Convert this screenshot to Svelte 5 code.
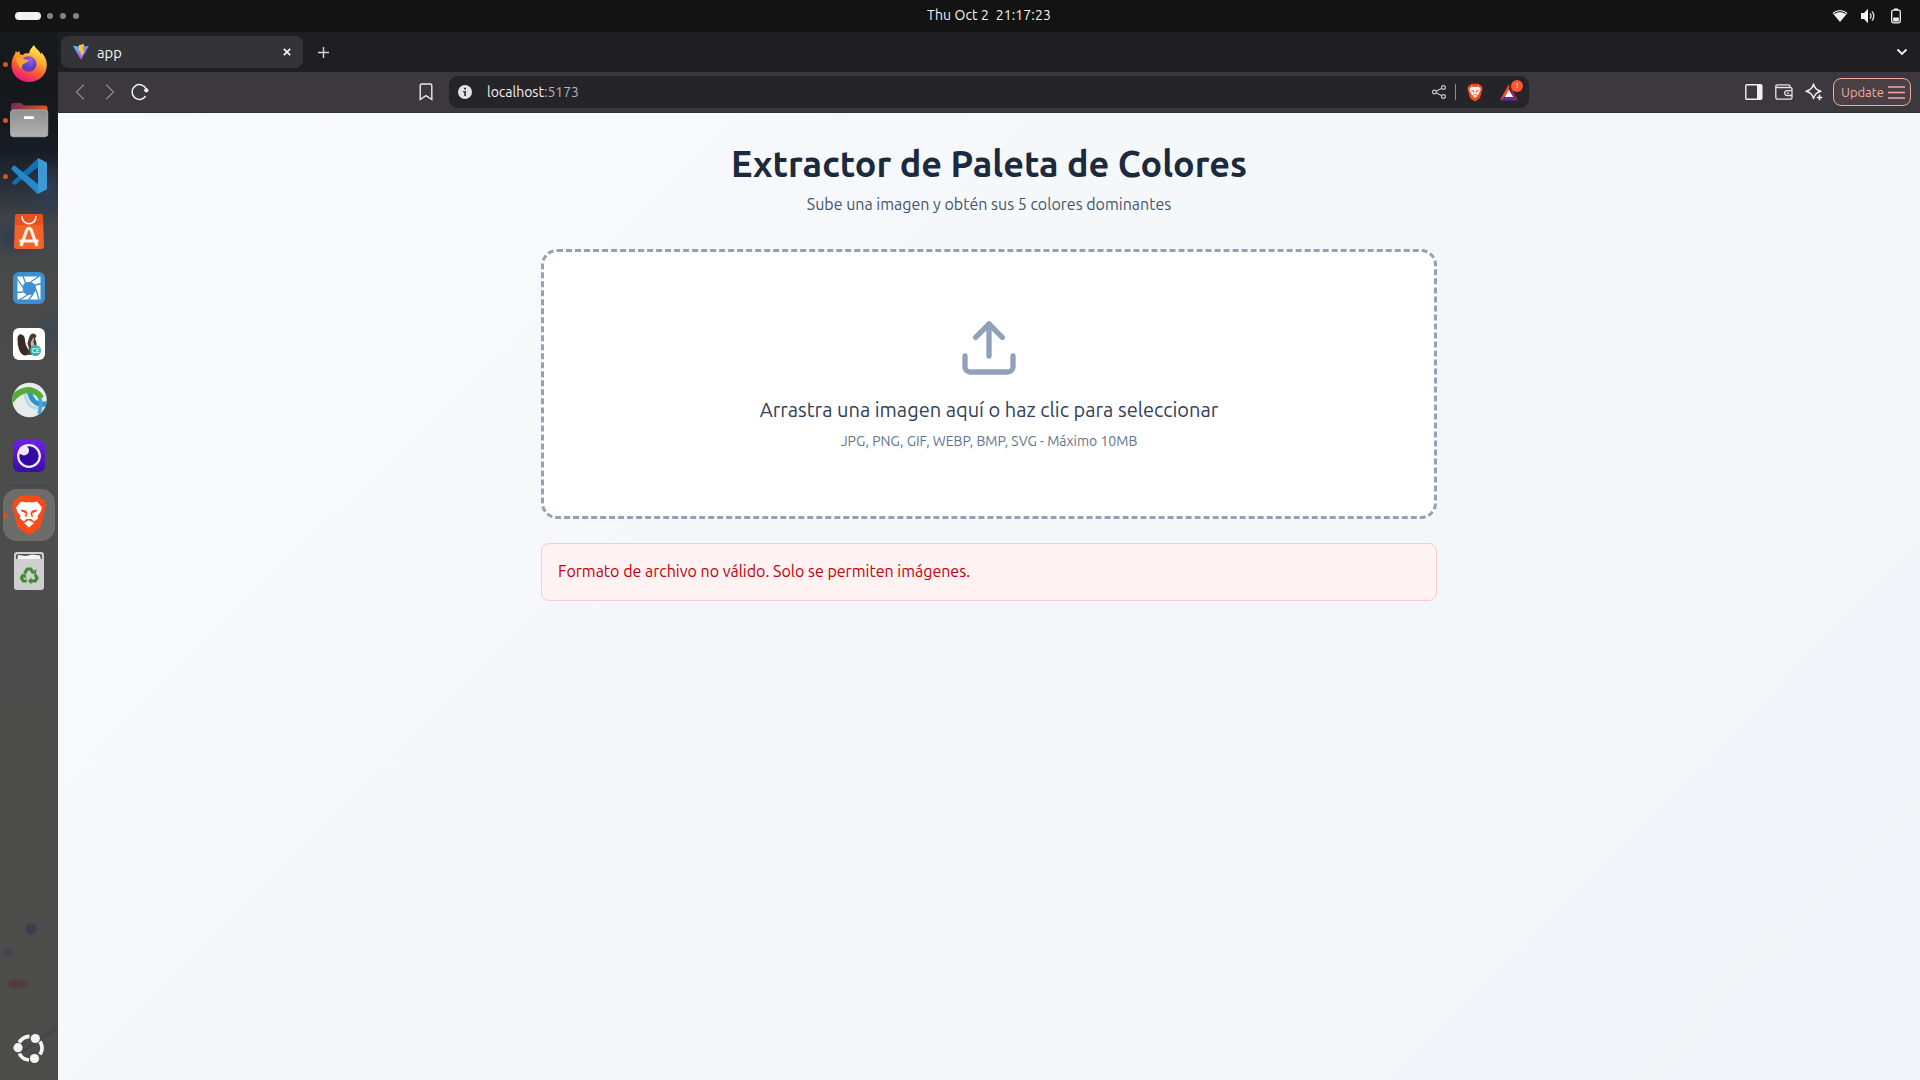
{#snippet lion()}
  <path class="shield" d="M19 9.500 Q21 8 24 8.500 L34 8.500 Q37 8 39 9.500 L41 12 L44 13 L46 19 L45 22 L41 38 Q40 41 37 43 L31 47 Q29 48.400 27 47 L21 43 Q18 41 17 38 L13 22 L12 19 L14 13 L17 12 Z" />
  <path class="face" fill-rule="evenodd" d="M21 14.500 L26 15.500 L29 15 L32 15.500 L37 14.500 L42 20.500 L40.500 25 L37.500 29 L38 31.500 L34 34.500 L31.500 32 L26.500 32 L24 34.500 L20 31.500 L20.500 29 L17.500 25 L16 20.500 Z M20.500 22.500 L21.500 24.500 L25.800 26.300 L25 30 L26.800 29.500 L27.500 26 L26 23.500 Z M37.500 22.500 L36.500 24.500 L32.200 26.300 L33 30 L31.200 29.500 L30.500 26 L32 23.500 Z M24 36 L29 33.200 L34 36 L29 40.600 Z" />
{/snippet}

<div class="desktop">
  <header class="topbar">
    <div class="spaces"><i class="pill"></i><i></i><i></i><i></i></div>
    <div class="clock">Thu Oct 2&nbsp; 21:17:23</div>
    <div class="status">
      <svg width="16" height="16" viewBox="0 0 16 16"><path d="M.5 5 Q8-.8 15.500 5 L8 14Z" fill="#f2f2f2"/><path d="M2.200 5.700 Q8 1.500 13.800 5.700" fill="none" stroke="#131313" stroke-width="1"/></svg>
      <svg width="16" height="16" viewBox="0 0 16 16"><path d="M1 5h3l4-4.200v14.400L4 11H1z" fill="#f2f2f2"/><path d="M10 5.500q2 2.500 0 5M12 3.300q3.600 4.700 0 9.400" fill="none" stroke="#ddd" stroke-width="1.300"/></svg>
      <svg width="16" height="16" viewBox="0 0 16 16"><rect x="3.700" y="2.200" width="8.600" height="12.600" rx="1.800" fill="none" stroke="#f2f2f2" stroke-width="1.300"/><path d="M6 .6h4v1.400H6zM5.200 9.500h5.600v4H5.200z" fill="#f2f2f2"/></svg>
    </div>
  </header>

  <nav class="dock">
    <div class="app running">
      <svg viewBox="0 0 58 56">
        <defs>
          <linearGradient id="fx" x1=".75" y1="0" x2=".3" y2="1"><stop offset="0" stop-color="#fff44f"/><stop offset=".35" stop-color="#ffb02e"/><stop offset=".65" stop-color="#ff5a36"/><stop offset="1" stop-color="#e8127c"/></linearGradient>
          <radialGradient id="fg" cx=".6" cy=".25"><stop offset="0" stop-color="#a05cf5"/><stop offset="1" stop-color="#5b3fc0"/></radialGradient>
        </defs>
        <path d="M34 9c1 2 2 3.500 4.500 5.500 1 1 1.500 2 1.800 3.400l1.200-1.400c3.500 4 5.300 8 5.300 12.500 0 10-8 17-17.800 17S11.500 39 11.500 29c0-4.500 1.500-8.500 3.700-11.500l.4-2.500 2 1.500 1.600-1.800.8 3.500 3 .8C25 16.500 28 17.500 29 17.500 29.500 14 31.500 11.500 34 9z" fill="url(#fx)"/>
        <circle cx="28.700" cy="28" r="7.800" fill="url(#fg)"/>
        <path d="M15.500 22c3-1.500 5-.8 7.500.5l5.500 1.800c-.5 2.500-4 2.700-5.500 4.200-1.300 1.300-1 3-2 4-2.500-2-4.500-6-5.500-10.500z" fill="#ffa22e"/>
      </svg>
    </div>
    <div class="app running">
      <svg viewBox="0 0 58 56">
        <defs>
          <linearGradient id="fb"><stop offset="0" stop-color="#762a50"/><stop offset="1" stop-color="#e4511f"/></linearGradient>
          <linearGradient id="ff" x2="0" y2="1"><stop offset="0" stop-color="#8f8f8f"/><stop offset="1" stop-color="#b1b1b1"/></linearGradient>
        </defs>
        <path d="M11 24V13.500q0-2.500 2.500-2.500H20q1.500 0 2.500 1.200T25 13.500h20q2.500 0 2.500 2.500v8z" fill="url(#fb)"/>
        <rect x="10.500" y="17.800" width="37.300" height="27" rx="3" fill="url(#ff)" stroke="#c3c3c3" stroke-width=".6"/>
        <rect x="24" y="24.300" width="10" height="2.700" rx=".6" fill="#fff"/>
      </svg>
    </div>
    <div class="app running">
      <svg viewBox="0 0 58 56">
        <path d="M11.500 20l3-2.500 25 20L37.500 45.700z" fill="#2489ca"/>
        <path d="M11.500 34.500l3 2.700L38.500 19V10z" fill="#1070b3"/>
        <path d="M14 17.600L11.500 20v1.500L37.500 45.700V36z" fill="#2489ca"/>
        <path d="M37 10.500q.7-.5 1.500-.2L46 14q1 .5 1 1.600v24.800q0 1.100-1 1.600l-7.500 3.600q-1 .3-1.700-.4 1.200.2 1.200-1.200V12q0-1.500-1-1.500z" fill="#3c99d4"/>
      </svg>
    </div>
    <div class="app">
      <svg viewBox="0 0 58 56">
        <path d="M15 12.500q0-2.500 2.500-2.500h23q2.500 0 2.500 2.500l1 30q0 2.500-2.500 2.500h-25Q14 45 14 42.500z" fill="#f2622b"/>
        <path d="M15 12.500q0-2.500 2.500-2.500h23q2.500 0 2.500 2.500l.3 8.500h-28.600z" fill="#e9501d"/>
        <path d="M22 12.500c0 9.500 14 9.500 14 0" fill="none" stroke="#fff" stroke-width="1.500" stroke-linecap="round"/>
        <path d="M21 42l6-16.500q2-2.500 4 0L37 42M19.500 37h19" fill="none" stroke="#fff4ea" stroke-width="3.200" stroke-linejoin="round"/>
      </svg>
    </div>
    <div class="app">
      <svg viewBox="0 0 58 56">
        <rect x="13" y="12" width="32" height="32" rx="6" fill="#3d8fd1"/>
        <path d="M17.500 16.500h23v23h-23z" fill="#fff"/>
        <path d="M25 22.500l6-.8 4.700 3.300.5 5-3 4.200-6 1-4-3.200-.7-5.500z" fill="#3d8fd1"/>
        <path d="M25.500 23l-2.500-7M31 21.800l8-5.500M35.300 25l6-1.500M36 29.500l3 10.500M33 34l-4.500 6M27.500 35l-8.500 5M23.300 32l-6.300.5M22.700 27l-5.500-8" stroke="#3d8fd1" stroke-width="1.300"/>
      </svg>
    </div>
    <div class="app">
      <svg viewBox="0 0 58 56">
        <rect x="13" y="12" width="32" height="32" rx="6" fill="#fff"/>
        <path d="M17.500 22q1-4.500 4-3.500 3.500 1 3.500 6 .3 5 3 8.500l1 5-3 1.500q-5 0-7-6-1.800-5-1.500-11.500z" fill="#3b2923"/>
        <path d="M29 22q1-4.500 4.500-4.500 2.500.5 3 2.500l-1.500 2.500 1.500 4-.5 9-5 3.500-5-.5 3-6-1.500-5z" fill="#4b382e"/>
        <path d="M33 22l1 .5-.5 3.500 1 4-3 1-1-4z" fill="#c8b6a8"/>
        <circle cx="35.500" cy="34.500" r="5.500" fill="#38b0b0"/>
        <text x="35.500" y="37" text-anchor="middle" font-size="6.500" font-weight="700" fill="#d6f3f2">CE</text>
      </svg>
    </div>
    <div class="app">
      <svg viewBox="0 0 58 56">
        <defs><clipPath id="gc"><circle cx="29.500" cy="28" r="17.300"/></clipPath></defs>
        <circle cx="29.500" cy="28" r="17.300" fill="#e6eceb"/>
        <g clip-path="url(#gc)" fill="none">
          <path d="M25 19c0 11 5 18 14 17" stroke="#b7dcd6" stroke-width="3"/>
          <path d="M29 18c2 12 9 17 20 13" stroke="#2f93cf" stroke-width="5"/>
          <path d="M36 20c5 5 6 13 3 22" stroke="#41a7d9" stroke-width="3.500"/>
          <path d="M9 32C15 21 25 16 33 19q6 2 8 7" stroke="#55ac38" stroke-width="6"/>
        </g>
      </svg>
    </div>
    <div class="app">
      <svg viewBox="0 0 58 56">
        <defs><linearGradient id="pg" x2="0" y2="1"><stop offset="0" stop-color="#6a22e8"/><stop offset="1" stop-color="#3a0ca3"/></linearGradient></defs>
        <rect x="13" y="12" width="32" height="32" rx="6" fill="url(#pg)"/>
        <circle cx="29" cy="28" r="10.800" fill="#3208a0" stroke="#f1ecfb" stroke-width="2.200"/>
        <circle cx="24" cy="22.500" r="5" fill="#f1ecfb"/>
      </svg>
    </div>
    <hr />
    <div class="app running active">
      <svg class="brave" viewBox="0 0 58 56">{@render lion()}</svg>
    </div>
    <div class="app">
      <svg viewBox="0 0 58 56">
        <rect x="14" y="9" width="30" height="38" rx="3" fill="#cfcfcf"/>
        <path d="M16 16v-3q0-2 2-2h22q2 0 2 2v3z" fill="#555"/>
        <path d="M17.500 16l.5-4 8 1 6-1.500 8 1 .8 3.500z" fill="#f5f5f5"/>
        <g fill="none" stroke="#3c8d2f" stroke-width="3.200"><path d="M24.500 30.500l2.800-4.500h3.500l2 3.200M35 31.500l2 3.500-1.700 3H30.500M26.800 38h-3.500L21.500 35l2-3.500"/></g>
        <path d="M31 30.500l5 .5.300-5zM31.500 34.500v7l-3.500-3.500zM20.500 32.500l5-2 .8 5z" fill="#3c8d2f"/>
      </svg>
    </div>
    <div class="app launcher">
      <svg viewBox="0 0 58 56">
        <g fill="none" stroke="#f4f4f4" stroke-width="3.700"><path d="M19.300 22.500A12 12 0 0 1 29.500 16.300"/><path d="M40 21.500A12 12 0 0 1 40 34.500"/><path d="M19.300 33.500A12 12 0 0 0 29 40"/></g>
        <g fill="#f4f4f4"><circle cx="35.300" cy="18.500" r="4.600"/><circle cx="18" cy="27.700" r="4.600"/><circle cx="34.500" cy="38.500" r="4.600"/></g>
      </svg>
    </div>
  </nav>

  <section class="browser">
    <div class="tabstrip">
      <div class="tab">
        <svg width="16" height="16" viewBox="0 0 16 16">
          <defs><linearGradient id="v" x2=".7" y2="1"><stop offset="0" stop-color="#41d1ff"/><stop offset="1" stop-color="#bd34fe"/></linearGradient></defs>
          <path d="M0 1.800L7 2.800 16 1.800 8.300 15.600q-.3.400-.6 0z" fill="url(#v)"/>
          <path d="M11.300.1L6 1.100l-.4 6.100 2.300-.3-.7 3.200 1.500-.4-1 4.300 4.300-7.500-2.300.3z" fill="#ffc72e"/>
        </svg>
        <span class="tabname">app</span>
        <svg class="close" width="8" height="8" viewBox="0 0 8 8"><path d="M.8.800l6.400 6.400M7.200.800L.8 7.200" stroke="#f4f4f6" stroke-width="1.700"/></svg>
      </div>
      <svg class="plus" width="11" height="11" viewBox="0 0 11 11"><path d="M5.500 0v11M0 5.500h11" stroke="#d5d4d8" stroke-width="1.400"/></svg>
      <svg class="chev" width="12" height="8" viewBox="0 0 12 8"><path d="M1.500 1.500L6 6l4.500-4.500" fill="none" stroke="#f4f4f6" stroke-width="1.800"/></svg>
    </div>

    <div class="toolbar">
      <div class="nav">
        <svg width="10" height="16" viewBox="0 0 10 16"><path d="M8.800.8L1.500 8l7.300 7.200" fill="none" stroke="#89888c" stroke-width="1.300"/></svg>
        <svg width="10" height="16" viewBox="0 0 10 16"><path d="M1.200.8L8.500 8l-7.300 7.200" fill="none" stroke="#89888c" stroke-width="1.300"/></svg>
        <svg class="reload" width="18" height="18" viewBox="0 0 18 18"><path d="M14.600 13.300A7.400 7.400 0 1 1 15.300 6" fill="none" stroke="#f4f4f6" stroke-width="1.500"/><circle cx="15.300" cy="7.300" r="2.100" fill="#f4f4f6"/></svg>
      </div>
      <svg class="bookmark" width="14" height="18" viewBox="0 0 14 18"><path d="M1.200 2.500Q1.200 1 2.700 1h8.600q1.500 0 1.500 1.500v14L7 12.700l-5.800 3.800z" fill="none" stroke="#e9e9eb" stroke-width="1.400"/></svg>
      <div class="urlbar">
        <svg width="14" height="14" viewBox="0 0 14 14"><circle cx="7" cy="7" r="7" fill="#e3e1e6"/><path d="M6 2.800h2v1.800H6zM5 6h3v5H6.200V7.200H5z" fill="#37363b"/></svg>
        <span class="url"><b>localhost</b>:5173</span>
        <svg class="share" width="14" height="14" viewBox="0 0 14 14"><g fill="none" stroke="#c5c4c9" stroke-width="1.200"><circle cx="2.500" cy="7" r="1.900"/><circle cx="11.500" cy="2.500" r="1.900"/><circle cx="11.500" cy="11.500" r="1.900"/><path d="M4.200 6.200l5.600-2.900M4.200 7.800l5.600 2.900"/></g></svg>
        <i class="bar"></i>
        <svg class="brave" width="16" height="19" viewBox="11 7 36 42">{@render lion()}</svg>
        <div class="bat">
          <svg width="18" height="17" viewBox="0 0 18 17"><path d="M9 0L0 16l9-5z" fill="#ff4724"/><path d="M9 0l9 16-5-2.500z" fill="#9e1f63"/><path d="M0 16.500h18L13 12H5z" fill="#662d91"/><path d="M9 5.700l4.200 7.300H4.800z" fill="#fff"/></svg>
          <span class="badge">1</span>
        </div>
      </div>
      <div class="actions">
        <svg width="18" height="16" viewBox="0 0 18 16"><rect x=".8" y=".8" width="16" height="14.400" rx="1" fill="none" stroke="#f0eff2" stroke-width="1.400"/><path d="M12 1h5v14h-5z" fill="#f0eff2"/></svg>
        <svg width="18" height="16" viewBox="0 0 18 16"><g fill="none" stroke="#e6e5e8" stroke-width="1.300"><path d="M15 3.500V2.300Q15 .8 13.500.8H2.500Q.8.8.8 2.500v10.800Q.8 15.200 2.700 15.200h12.600q1.700 0 1.700-1.700V5.200q0-1.700-1.700-1.700H2.500Q.8 3.500.8 2.200M17 6.700h-4.500q-2.800 0-2.800 2.400t2.800 2.400H17"/></g><path d="M12 8.500h2v1.200h-2z" fill="#e6e5e8"/></svg>
        <svg width="18" height="18" viewBox="0 0 18 18"><path d="M8.500 1Q9.900 7 16 8.200 9.900 9.500 8.500 15.500 7.100 9.500 1 8.200 7.100 7 8.500 1z" fill="none" stroke="#eeedf0" stroke-width="1.400" stroke-linejoin="round"/><path d="M14.500 11v6.500M11.300 14.300h6.500" stroke="#3b393e" stroke-width="3"/><path d="M14.500 11.800v5.400M11.800 14.500h5.400" stroke="#f4f4f6" stroke-width="1.500"/></svg>
        <button class="update">Update<svg width="17" height="13" viewBox="0 0 17 13"><path d="M0 1h17M0 6.500h17M0 12h17" stroke="#f0a8a4" stroke-width="1.300"/></svg></button>
      </div>
    </div>

    <main class="page">
      <h1>Extractor de Paleta de Colores</h1>
      <p class="sub">Sube una imagen y obtén sus 5 colores dominantes</p>
      <div class="drop">
        <svg width="64" height="64" viewBox="0 0 24 24" fill="none" stroke="#90a1b9" stroke-width="2" stroke-linecap="round" stroke-linejoin="round"><path d="M21 15v4a2 2 0 0 1-2 2H5a2 2 0 0 1-2-2v-4"/><path d="M17 8l-5-5-5 5"/><path d="M12 3v12"/></svg>
        <p class="lead">Arrastra una imagen aquí o haz clic para seleccionar</p>
        <p class="hint">JPG, PNG, GIF, WEBP, BMP, SVG - Máximo 10MB</p>
      </div>
      <div class="error">Formato de archivo no válido. Solo se permiten imágenes.</div>
    </main>
  </section>
</div>

<style>
  :global(body) { margin: 0; overflow: hidden; }
  .desktop { width: 1920px; height: 1080px; display: grid; grid-template: 32px 1048px / 58px 1fr; font-family: Ubuntu, "Noto Sans", sans-serif; }
  svg { display: block; flex: none; }
  .topbar { grid-column: 1 / 3; background: #131313; color: #f2f2f2; display: grid; grid-template-columns: calc(50% - 33px) auto 1fr; align-items: center; }
  .spaces { display: flex; align-items: center; gap: 7px; padding-left: 15px; }
  .spaces i { width: 6px; height: 6px; border-radius: 3px; background: #858585; }
  .spaces .pill { width: 26px; height: 8px; border-radius: 4px; background: #f2f2f2; margin-right: -1px; }
  .clock { font-size: 14px; letter-spacing: .12px; line-height: 30px; padding-bottom: 2px; }
  .status { display: flex; justify-content: flex-end; gap: 12px; padding-right: 16px; }

  .dock { display: flex; flex-direction: column; box-sizing: border-box; padding: 4px 0; background:
    radial-gradient(ellipse 6px 6px at 31px 897px, #43394d 80%, transparent),
    radial-gradient(ellipse 6px 5px at 8px 921px, #47424d 70%, transparent),
    radial-gradient(ellipse 12px 6px at 17px 952px, #503d42 70%, transparent),
    linear-gradient(145deg, transparent 58%, #444149 60%, transparent 64%) 20px 975px / 38px 50px no-repeat,
    radial-gradient(ellipse 22px 34px at 48px 160px, #2d3d54, transparent),
    radial-gradient(ellipse 26px 22px at 14px 205px, #2e3d50, transparent),
    radial-gradient(ellipse 20px 26px at 50px 300px, #3c4754, transparent),
    linear-gradient(#171a1c 0, #14181b 60px, #171b23 115px, #272d37 150px, #42454a 190px, #484948 240px, #4b4c4b 400px, #4c4d4b 100%); }
  .dock hr { width: 40px; height: 1px; border: 0; margin: 1px 0 1px 9px; background: #414241; flex: none; }
  .app { height: 56px; flex: none; position: relative; }
  .app svg { width: 58px; height: 56px; position: relative; }
  .running::before { content: ""; position: absolute; left: 3px; top: 26px; width: 5px; height: 5px; border-radius: 50%; background: #e0501e; z-index: 2; }
  .active::after { content: ""; position: absolute; inset: 2px 3px; border-radius: 14px; background: #6c6d6b; }
  .active svg { z-index: 1; }
  .launcher { margin-top: auto; }
  .brave .shield { fill: #fb4a1a; }
  .brave .face { fill: #fff; }

  .browser { display: grid; grid-template-rows: 40px 41px 1fr; }
  .tabstrip { background: #1f1e23; display: flex; align-items: center; padding: 0 12px 0 3px; }
  .tab { box-sizing: border-box; width: 242px; height: 32px; border-radius: 8px; background: #343337; display: flex; align-items: center; padding: 0 12px; color: #f4f4f6; font-size: 14.7px; }
  .tabname { margin-left: 8px; }
  .close { margin-left: auto; }
  .plus { margin-left: 15px; }
  .chev { margin-left: auto; }

  .toolbar { background: #3b393e; border-bottom: 1px solid #2f2d33; box-sizing: border-box; display: flex; align-items: center; }
  .nav { display: flex; align-items: center; gap: 20px; padding-left: 17px; width: 344px; }
  .reload { margin-left: -4px; }
  .bookmark { margin-right: 16px; }
  .urlbar { box-sizing: border-box; width: 1080px; height: 32px; border-radius: 9px; background: #252429; display: flex; align-items: center; padding: 0 11px 0 9px; color: #b4b3b8; font-size: 14px; }
  .url { margin-left: 15px; }
  .url b { font-weight: 400; color: #f2f2f4; }
  .share { margin-left: auto; }
  .bar { width: 1px; height: 16px; background: #8c8b90; margin: 0 11px 0 9px; }
  .bat { position: relative; margin-left: 17px; width: 18px; }
  .badge { position: absolute; left: 11px; top: -4px; width: 12px; height: 12px; border-radius: 50%; background: #ff5630; color: #fff; font-size: 8px; line-height: 12px; text-align: center; }
  .actions { margin-left: auto; padding-right: 9px; display: flex; align-items: center; gap: 12px; }
  .update { box-sizing: border-box; width: 78px; height: 28px; margin-left: -2px; border: 1px solid #f5aaa6; border-radius: 8px; background: #4b4145; color: #f0a8a4; display: flex; align-items: center; justify-content: space-between; padding: 0 5px 0 7px; font: 13px Ubuntu, "Noto Sans", sans-serif; }

  .page { background: linear-gradient(135deg, #f8fafc, #f1f5f9); display: flex; flex-direction: column; align-items: center; }
  h1, p { margin: 0; white-space: nowrap; }
  h1 { font-size: 36px; font-weight: 600; line-height: 40px; color: #1d293d; margin-top: 31px; }
  .sub { font-size: 16px; line-height: 24px; color: #45556c; margin-top: 8px; }
  .drop { box-sizing: border-box; width: 896px; height: 270px; margin-top: 33px; border: 3px dashed #90a1b9; border-radius: 16px; background: #fff; display: flex; flex-direction: column; align-items: center; padding-top: 64px; }
  .lead { font-size: 20px; line-height: 28px; color: #314158; margin-top: 16px; }
  .hint { font-size: 14px; line-height: 20px; color: #62748e; margin-top: 7px; }
  .error { box-sizing: border-box; width: 896px; height: 58px; margin-top: 24px; border: 1px solid #ffc9c9; border-radius: 8px; background: #fef2f2; color: #c10007; font-size: 16px; line-height: 24px; padding: 15px 16px; }
</style>
